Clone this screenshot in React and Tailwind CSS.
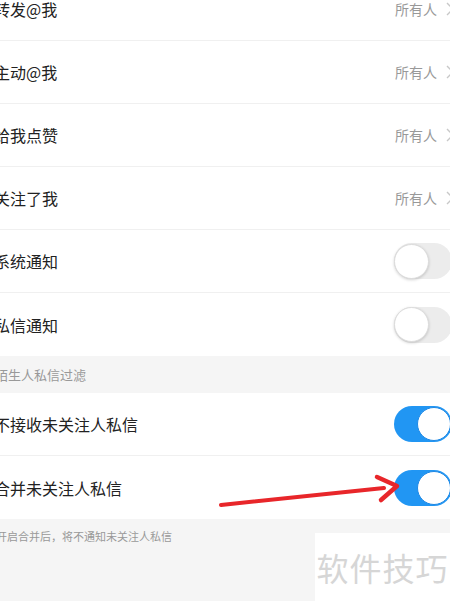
import React from 'react';

const font = { fontFamily: '"Noto Sans CJK SC", "Noto Sans", sans-serif' };

const Chevron = () => (
  <svg width="8" height="14" viewBox="0 0 8 14" className="ml-[9px]">
    <path d="M1 1l6 6-6 6" fill="none" stroke="#c8c8c8" strokeWidth="1.4" />
  </svg>
);

const Toggle = ({ on }) =>
  on ? (
    <div className="w-[58px] h-[36px] rounded-full bg-[#2196f3] flex items-center justify-end pr-[1px]">
      <div className="w-[34px] h-[34px] rounded-full bg-white border border-[#1e88e5]" />
    </div>
  ) : (
    <div className="w-[58px] h-[36px] rounded-full bg-[#ececec] flex items-center">
      <div className="w-[35px] h-[35px] rounded-full bg-white border border-[#dcdcdc] shadow-[0_1px_3px_rgba(0,0,0,0.18)]" />
    </div>
  );

const Row = ({ label, right, last }) => (
  <div className={`h-[63px] flex items-center justify-between pl-[2px] pr-[2px] ${last ? '' : 'border-b border-[#f0f0f0]'}`}>
    <span className="text-[16px] text-[#222]">{label}</span>
    {right}
  </div>
);

const Value = () => (
  <div className="flex items-center mr-[-2px]">
    <span className="text-[14px] text-[#999]">所有人</span>
    <Chevron />
  </div>
);

export default function App() {
  return (
    <div className="w-[450px] h-[601px] overflow-hidden bg-white relative" style={font}>
      <div className="w-[462px] ml-[-8px] mt-[-22px]">
        <div className="bg-white">
          <Row label="转发@我" right={<Value />} />
          <Row label="主动@我" right={<Value />} />
          <Row label="给我点赞" right={<Value />} />
          <Row label="关注了我" right={<Value />} />
          <Row label="系统通知" right={<Toggle on={false} />} />
          <Row label="私信通知" right={<Toggle on={false} />} last />
        </div>
        <div className="h-[37px] bg-[#f5f5f5] flex items-center pl-[3px]">
          <span className="text-[13px] text-[#999]">陌生人私信过滤</span>
        </div>
        <div className="bg-white">
          <Row label="不接收未关注人私信" right={<Toggle on />} />
          <Row label="合并未关注人私信" right={<Toggle on />} last />
        </div>
        <div className="bg-[#f5f5f5] h-[200px] pt-[3px] pl-[4px]">
          <span className="text-[11px] text-[#999]">开启合并后，将不通知未关注人私信</span>
        </div>
      </div>
      <svg className="absolute left-0 top-0" width="450" height="601">
        <line x1="221" y1="505" x2="384" y2="488" stroke="#e8262a" strokeWidth="4" strokeLinecap="round" />
        <path d="M377 477 L397 486 L381 500" fill="none" stroke="#e8262a" strokeWidth="4.5" strokeLinecap="round" strokeLinejoin="round" />
      </svg>
      <div className="absolute left-[315px] top-[533px] w-[135px] h-[68px] bg-white flex items-center justify-center">
        <span className="text-[32px] text-[#d6d6d6] tracking-[1px]">软件技巧</span>
      </div>
    </div>
  );
}
